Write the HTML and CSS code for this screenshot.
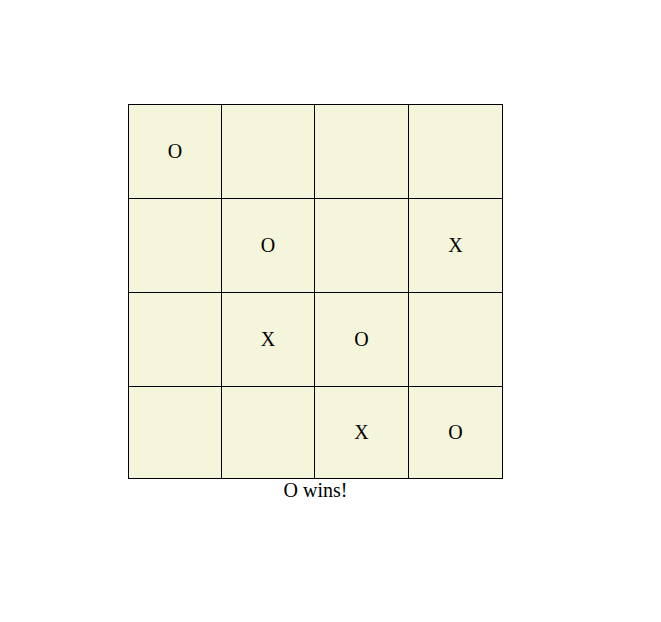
FILE: index.html
```html
<!doctype html>
<html>
	<head>
		<link rel="stylesheet" href="styles.css">
	</head>
	<body>
		<!-- Tablero -->
		<div class="juego">
			<div class="tablero">
				<div class="casilla">O</div>
				<div class="casilla"></div>
				<div class="casilla"></div>
				<div class="casilla"></div>

				<div class="casilla"></div>
				<div class="casilla">O</div>
				<div class="casilla"></div>
				<div class="casilla">X</div>

				<div class="casilla"></div>
				<div class="casilla">X</div>
				<div class="casilla">O</div>
				<div class="casilla"></div>

				<div class="casilla"></div>
				<div class="casilla"></div>
				<div class="casilla">X</div>
				<div class="casilla">O</div>
			</div>
			<!-- Resultado -->
			<p class="estado">O wins!</p>
		</div>
	</body>
</html>
```

FILE: styles.css
```css
/* Estilos generales */
body {
	margin: 8px;
	font-family: "Liberation Serif", "Times New Roman", serif;
	background: white;
	color: black;
}
.juego {
	width: 375px;
	margin-left: 120px;
	padding-top: 96px;
}
/* Tablero 4x4 */
.tablero {
	display: grid;
	grid-template-columns: 93px 93px 94px 94px;
	grid-template-rows: 94px 94px 94px 92px;
	border-left: 1px solid black;
	border-top: 1px solid black;
}
.casilla {
	box-sizing: border-box;
	border-right: 1px solid black;
	border-bottom: 1px solid black;
	background: beige;
	display: flex;
	align-items: center;
	justify-content: center;
	font-size: 20px;
}
/* Texto del resultado */
.estado {
	margin: 0px;
	text-align: center;
	font-size: 20px;
}
```
